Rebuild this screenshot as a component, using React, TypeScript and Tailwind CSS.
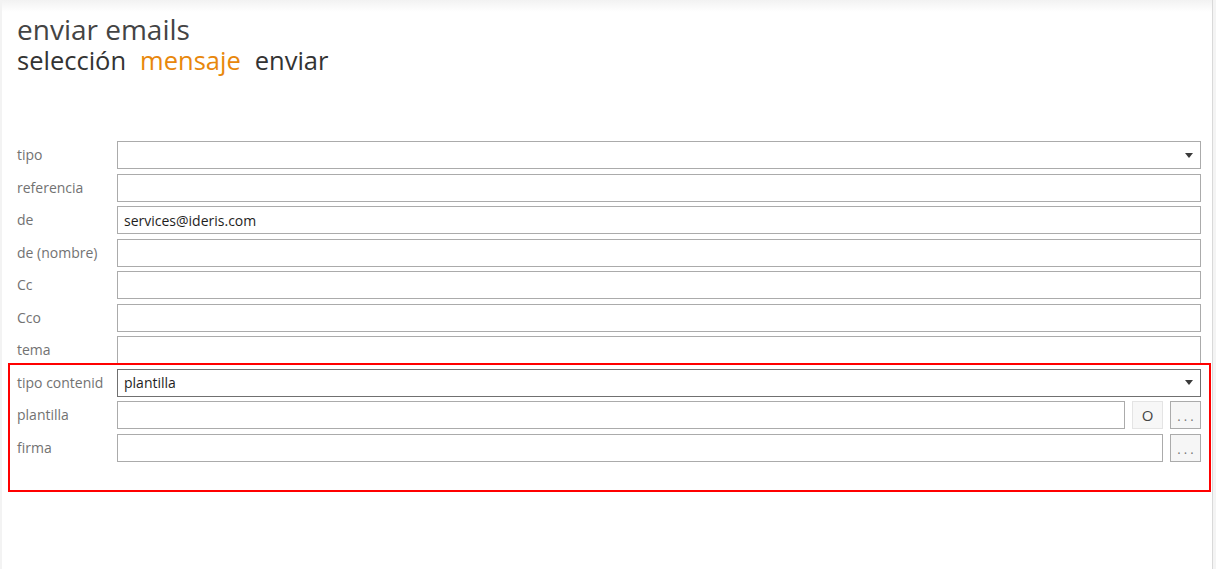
import React from 'react';

const font = { fontFamily: '"Segoe UI", "Open Sans", "Noto Sans", sans-serif' };

function Caret() {
  return (
    <svg viewBox="0 0 8 5" className="w-[8px] h-[5px] text-[#3a3a3a]">
      <polygon points="0,0 8,0 4,5" fill="currentColor" />
    </svg>
  );
}

function Row({ label, children }: { label: string; children: React.ReactNode }) {
  return (
    <div className="flex items-center h-[28px]">
      <div className="w-[100px] shrink-0 text-[14px] text-[#727272] leading-none">{label}</div>
      <div className="flex-1 flex items-center gap-[7px] h-full">{children}</div>
    </div>
  );
}

function Field({ value, select, focused }: { value?: string; select?: boolean; focused?: boolean }) {
  return (
    <div
      className={`flex-1 h-full flex items-center justify-between pl-[6px] pr-[7px] bg-white border ${
        focused ? 'border-[#707070]' : 'border-[#ababab]'
      } text-[14px] text-[#1e1e1e]`}
    >
      <span>{value}</span>
      {select && <Caret />}
    </div>
  );
}

function SmallButton({ label, light }: { label: string; light?: boolean }) {
  return (
    <button
      className={`w-[31px] h-full shrink-0 flex items-center justify-center border ${
        light
          ? 'border-[#e4e4e4] bg-[#f7f7f7] text-[#444] text-[15px]'
          : 'border-[#ababab] bg-[#f6f6f6] text-[#777] text-[13px] gap-[3px] pt-[4px]'
      }`}
    >
      {light ? label : label.split('').map((c, i) => <span key={i}>{c}</span>)}
    </button>
  );
}

export default function App() {
  return (
    <div className="w-[1216px] h-[569px] flex bg-white overflow-hidden" style={font}>
      <div className="relative flex-1 h-full border-l-2 border-[#f3f3f3] border-r border-r-[#d9d9d9] bg-gradient-to-b from-[#f2f2f2] to-white to-[12px]">
        {/* encabezado */}
        <div className="pl-[15px] pt-[13px]">
          <h1 className="text-[28px] leading-[32px] text-[#444444]">enviar emails</h1>
          <div className="flex gap-[14px] text-[25.5px] leading-[30px] text-[#333333]">
            <span>selección</span>
            <span className="text-[#e8870c]">mensaje</span>
            <span>enviar</span>
          </div>
        </div>

        {/* formulario */}
        <div className="pl-[15px] pr-[11px] mt-[66px] flex flex-col gap-[4.5px]">
          <Row label="tipo">
            <Field select />
          </Row>
          <Row label="referencia">
            <Field />
          </Row>
          <Row label="de">
            <Field value="services@ideris.com" />
          </Row>
          <Row label="de (nombre)">
            <Field />
          </Row>
          <Row label="Cc">
            <Field />
          </Row>
          <Row label="Cco">
            <Field />
          </Row>
          <Row label="tema">
            <Field />
          </Row>
          <Row label="tipo contenid">
            <Field value="plantilla" select focused />
          </Row>
          <Row label="plantilla">
            <Field />
            <SmallButton label="O" light />
            <SmallButton label="..." />
          </Row>
          <Row label="firma">
            <Field />
            <SmallButton label="..." />
          </Row>
        </div>

        {/* marco de anotación */}
        <div className="absolute left-[6px] top-[363px] w-[1203px] h-[129px] border-2 border-[#ff0000] pointer-events-none" />
      </div>
      <div className="w-[3px] h-full bg-[#f4f4f4]" />
    </div>
  );
}
